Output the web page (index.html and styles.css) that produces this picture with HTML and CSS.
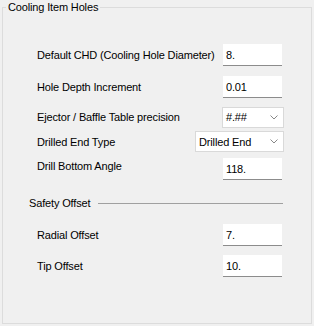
FILE: index.html
```html
<!DOCTYPE html>
<html lang="en">
<head>
  <meta charset="UTF-8" />
  <title>Cooling Item Holes</title>
  <link rel="stylesheet" href="styles.css">
</head>
<body>

  <!-- Cooling Item Holes -->
  <fieldset class="group">
    <legend>Cooling Item Holes</legend>

    <div class="row row-chd">
      <label for="chd">Default CHD (Cooling Hole Diameter)</label>
      <input type="text" id="chd" class="edit" value="8." />
    </div>

    <div class="row row-depth">
      <label for="depth">Hole Depth Increment</label>
      <input type="text" id="depth" class="edit" value="0.01" />
    </div>

    <div class="row row-precision">
      <label>Ejector / Baffle Table precision</label>
      <div class="combo combo-small">
        <span>#.##</span>
        <svg class="chevron" width="8" height="5" viewBox="0 0 8 5"><path d="M0.5 0.5 L4 4 L7.5 0.5" fill="none" stroke="#888" stroke-width="1"/></svg>
      </div>
    </div>

    <div class="row row-endtype">
      <label>Drilled End Type</label>
      <div class="combo combo-wide">
        <span>Drilled End</span>
        <svg class="chevron" width="8" height="5" viewBox="0 0 8 5"><path d="M0.5 0.5 L4 4 L7.5 0.5" fill="none" stroke="#888" stroke-width="1"/></svg>
      </div>
    </div>

    <div class="row row-angle">
      <label for="angle">Drill Bottom Angle</label>
      <input type="text" id="angle" class="edit" value="118." />
    </div>

    <!-- Safety Offset -->
    <div class="section">
      <span>Safety Offset</span>
      <div class="section-line"></div>
    </div>

    <div class="row row-radial">
      <label for="radial">Radial Offset</label>
      <input type="text" id="radial" class="edit" value="7." />
    </div>

    <div class="row row-tip">
      <label for="tip">Tip Offset</label>
      <input type="text" id="tip" class="edit" value="10." />
    </div>
  </fieldset>

</body>
</html>
```

FILE: styles.css
```css
html, body {
  margin: 0;
  padding: 0;
}
body {
  font-family: "Liberation Sans", Arial, sans-serif;
  font-size: 11px;
  letter-spacing: -0.15px;
  color: #000;
  background-color: #f0f0f0;
  width: 314px;
  height: 326px;
  overflow: hidden;
}
.group {
  margin: 0 2px 0 2px;
  padding: 0 0 0 0;
  height: 324px;
  border: 1px solid #dcdcdc;
  box-sizing: border-box;
}
.group legend {
  margin-left: 3px;
  padding: 0 2px 0 2px;
  line-height: 15px;
}
.row {
  display: flex;
  align-items: center;
  justify-content: space-between;
  height: 22px;
  padding-left: 34px;
  padding-right: 27px;
}
.row-chd { margin-top: 29px; }
.row-depth { margin-top: 10px; }
.row-precision { margin-top: 8px; }
.row-endtype { margin-top: 3px; height: 21px; }
.row-angle { margin-top: 6px; }
.row-angle label { margin-top: -6px; }
.row-radial { margin-top: 11px; }
.row-tip { margin-top: 9px; }
.edit {
  width: 59px;
  height: 22px;
  margin: 0 2px 0 0;
  padding: 0 3px;
  box-sizing: border-box;
  border: none;
  border-bottom: 1px solid #8c8c8c;
  background-color: #fff;
  font-family: inherit;
  font-size: 11px;
  letter-spacing: -0.15px;
  color: #000;
  outline: none;
}
.combo {
  display: flex;
  align-items: center;
  justify-content: space-between;
  height: 21px;
  padding: 0 5px 0 3px;
  box-sizing: border-box;
  border: 1px solid #d9d9d9;
  background-color: #fff;
}
.combo-small { width: 62px; }
.combo-wide { width: 89px; }
.chevron {
  display: block;
}
.section {
  display: flex;
  align-items: center;
  margin-top: 13px;
  height: 20px;
  padding-left: 26px;
  padding-right: 28px;
}
.section-line {
  flex: 1;
  margin-left: 8px;
  border-top: 1px solid #a0a0a0;
}
```
